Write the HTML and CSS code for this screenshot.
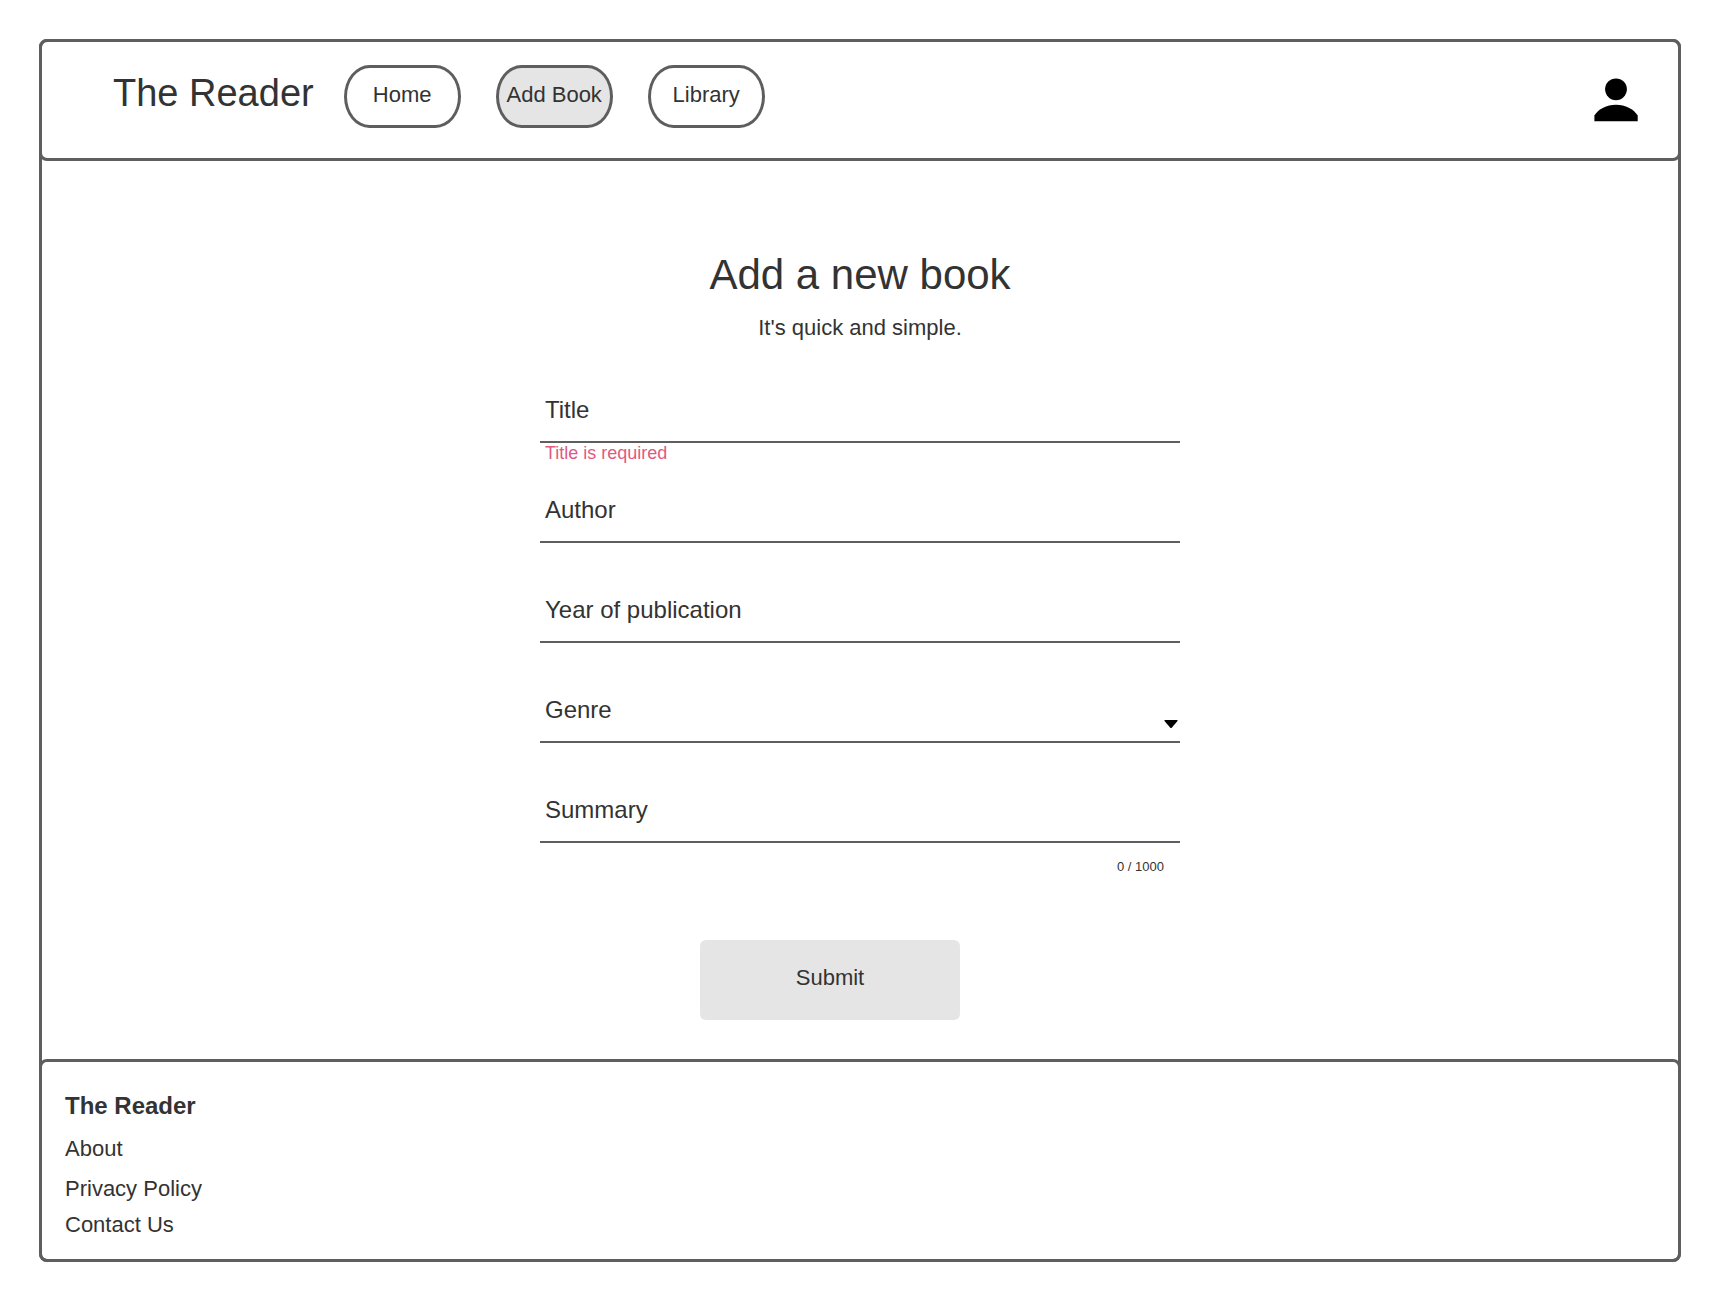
FILE: index.html
```html
<!DOCTYPE html>
<html lang="en">
<head>
  <meta charset="utf-8">
  <meta name="viewport" content="width=device-width, initial-scale=1">
  <title>The Reader - Add Book</title>
  <link rel="stylesheet" href="styles.css">
</head>
<body>
  <div class="page">
    <header class="site-header">
      <a class="brand" href="#">The Reader</a>
      <nav class="site-nav">
        <a class="pill" href="#">Home</a>
        <a class="pill pill-active" href="#" aria-current="page">Add Book</a>
        <a class="pill" href="#">Library</a>
      </nav>
      <button class="account" type="button" aria-label="Account">
        <svg class="account-icon" viewBox="0 0 44 44" aria-hidden="true">
          <circle cx="22" cy="11.3" r="10.9"/>
          <path d="M.4 43.2V37.500C4.500 31 12.500 26.800 22 26.800s17.500 4.200 21.700 10.700v5.700z"/>
        </svg>
      </button>
    </header>

    <main class="content">
      <h1 class="title">Add a new book</h1>
      <p class="subtitle">It's quick and simple.</p>

      <form class="book-form">
        <div class="field">
          <label class="label" for="title">Title</label>
          <input class="control" id="title" type="text" aria-describedby="title-error" aria-invalid="true">
          <p class="error" id="title-error">Title is required</p>
        </div>
        <div class="field">
          <label class="label" for="author">Author</label>
          <input class="control" id="author" type="text">
        </div>
        <div class="field">
          <label class="label" for="year">Year of publication</label>
          <input class="control" id="year" type="text" inputmode="numeric">
        </div>
        <div class="field">
          <label class="label" for="genre">Genre</label>
          <select class="control" id="genre"><option value=""></option></select>
          <svg class="arrow" viewBox="0 0 14 8" aria-hidden="true"><path d="M.5 0h13v1L7.500 8h-1L.5 1z"/></svg>
        </div>
        <div class="field">
          <label class="label" for="summary">Summary</label>
          <textarea class="control" id="summary" rows="1" maxlength="1000"></textarea>
          <p class="counter">0 / 1000</p>
        </div>
        <button class="submit" type="submit">Submit</button>
      </form>
    </main>

    <footer class="site-footer">
      <h2 class="footer-title">The Reader</h2>
      <ul class="footer-links">
        <li class="footer-lead"><a href="#">About</a></li>
        <li><a href="#">Privacy Policy</a></li>
        <li><a href="#">Contact Us</a></li>
      </ul>
    </footer>
  </div>
</body>
</html>
```
FILE: styles.css
```css
:root {
  --line: #5e5e5e;
  --text: #333;
  --fill: #e5e5e5;
}

* {
  box-sizing: border-box;
}

body {
  margin: 0;
  padding: 39px;
  background: #fff;
  color: var(--text);
  font: 22px/28px "Liberation Sans", Arial, sans-serif;
}

h1,
h2,
p,
ul {
  margin: 0;
  padding: 0;
}

a {
  color: inherit;
  text-decoration: none;
}

button,
input,
select,
textarea {
  color: inherit;
  font: inherit;
}

.page {
  border: 3px solid var(--line);
  border-radius: 8px;
}

.site-header,
.site-footer {
  margin: -3px;
  border: 3px solid var(--line);
  border-radius: 8px;
}

.site-header {
  display: flex;
  align-items: center;
  gap: 30px;
  padding: 23px 40px 30px 71px;
}

.brand {
  padding-bottom: 8px;
  font-size: 38px;
  line-height: 44px;
}

.site-nav {
  display: flex;
  gap: 35px;
}

.pill {
  display: flex;
  align-items: center;
  justify-content: center;
  width: 117px;
  height: 63px;
  padding-bottom: 4px;
  border: 3px solid var(--line);
  border-radius: 26px / 32px;
  white-space: nowrap;
}

.pill-active {
  background: var(--fill);
}

.account {
  margin-left: auto;
  padding: 7px 0 0;
  border: 0;
  background: none;
}

.account-icon {
  display: block;
  width: 44px;
  height: 44px;
  fill: #000;
}

.content {
  display: flex;
  flex-direction: column;
  align-items: center;
  padding: 93px 24px 42px;
}

.title {
  margin-bottom: 15px;
  font-size: 42px;
  font-weight: 400;
  line-height: 48px;
}

.book-form {
  width: 100%;
  max-width: 640px;
  margin-top: 53px;
}

/* The label lies in the same grid cell as its control. */
.field {
  display: grid;
  grid-template-rows: 48px auto;
  align-content: start;
  min-height: 100px;
}

.label,
.control,
.arrow {
  grid-area: 1 / 1;
}

.label {
  padding-left: 5px;
  font-size: 24px;
  line-height: 30px;
  pointer-events: none;
}

.control {
  width: 100%;
  height: 48px;
  padding: 0 5px;
  border: 0;
  border-bottom: 2px solid var(--line);
  border-radius: 0;
  background: none;
  appearance: none;
  resize: none;
}

.arrow {
  align-self: end;
  justify-self: end;
  width: 14px;
  height: 8px;
  margin: 0 2px 15px;
  pointer-events: none;
}

.error {
  padding-left: 5px;
  color: #df5a82;
  font-size: 18px;
  line-height: 20px;
}

.counter {
  padding: 16px 16px 0;
  font-size: 13px;
  line-height: 16px;
  text-align: right;
}

.submit {
  display: block;
  width: 260px;
  height: 80px;
  margin: 45px 0 0 160px;
  padding: 0 0 4px;
  border: 0;
  border-radius: 6px;
  background: var(--fill);
}

.site-footer {
  padding: 30px 23px 20px;
}

.footer-title {
  margin-bottom: 15px;
  font-size: 24px;
  line-height: 28px;
}

.footer-links {
  display: flex;
  flex-direction: column;
  gap: 8px;
  list-style: none;
}

.footer-lead {
  padding-bottom: 4px;
}
```
